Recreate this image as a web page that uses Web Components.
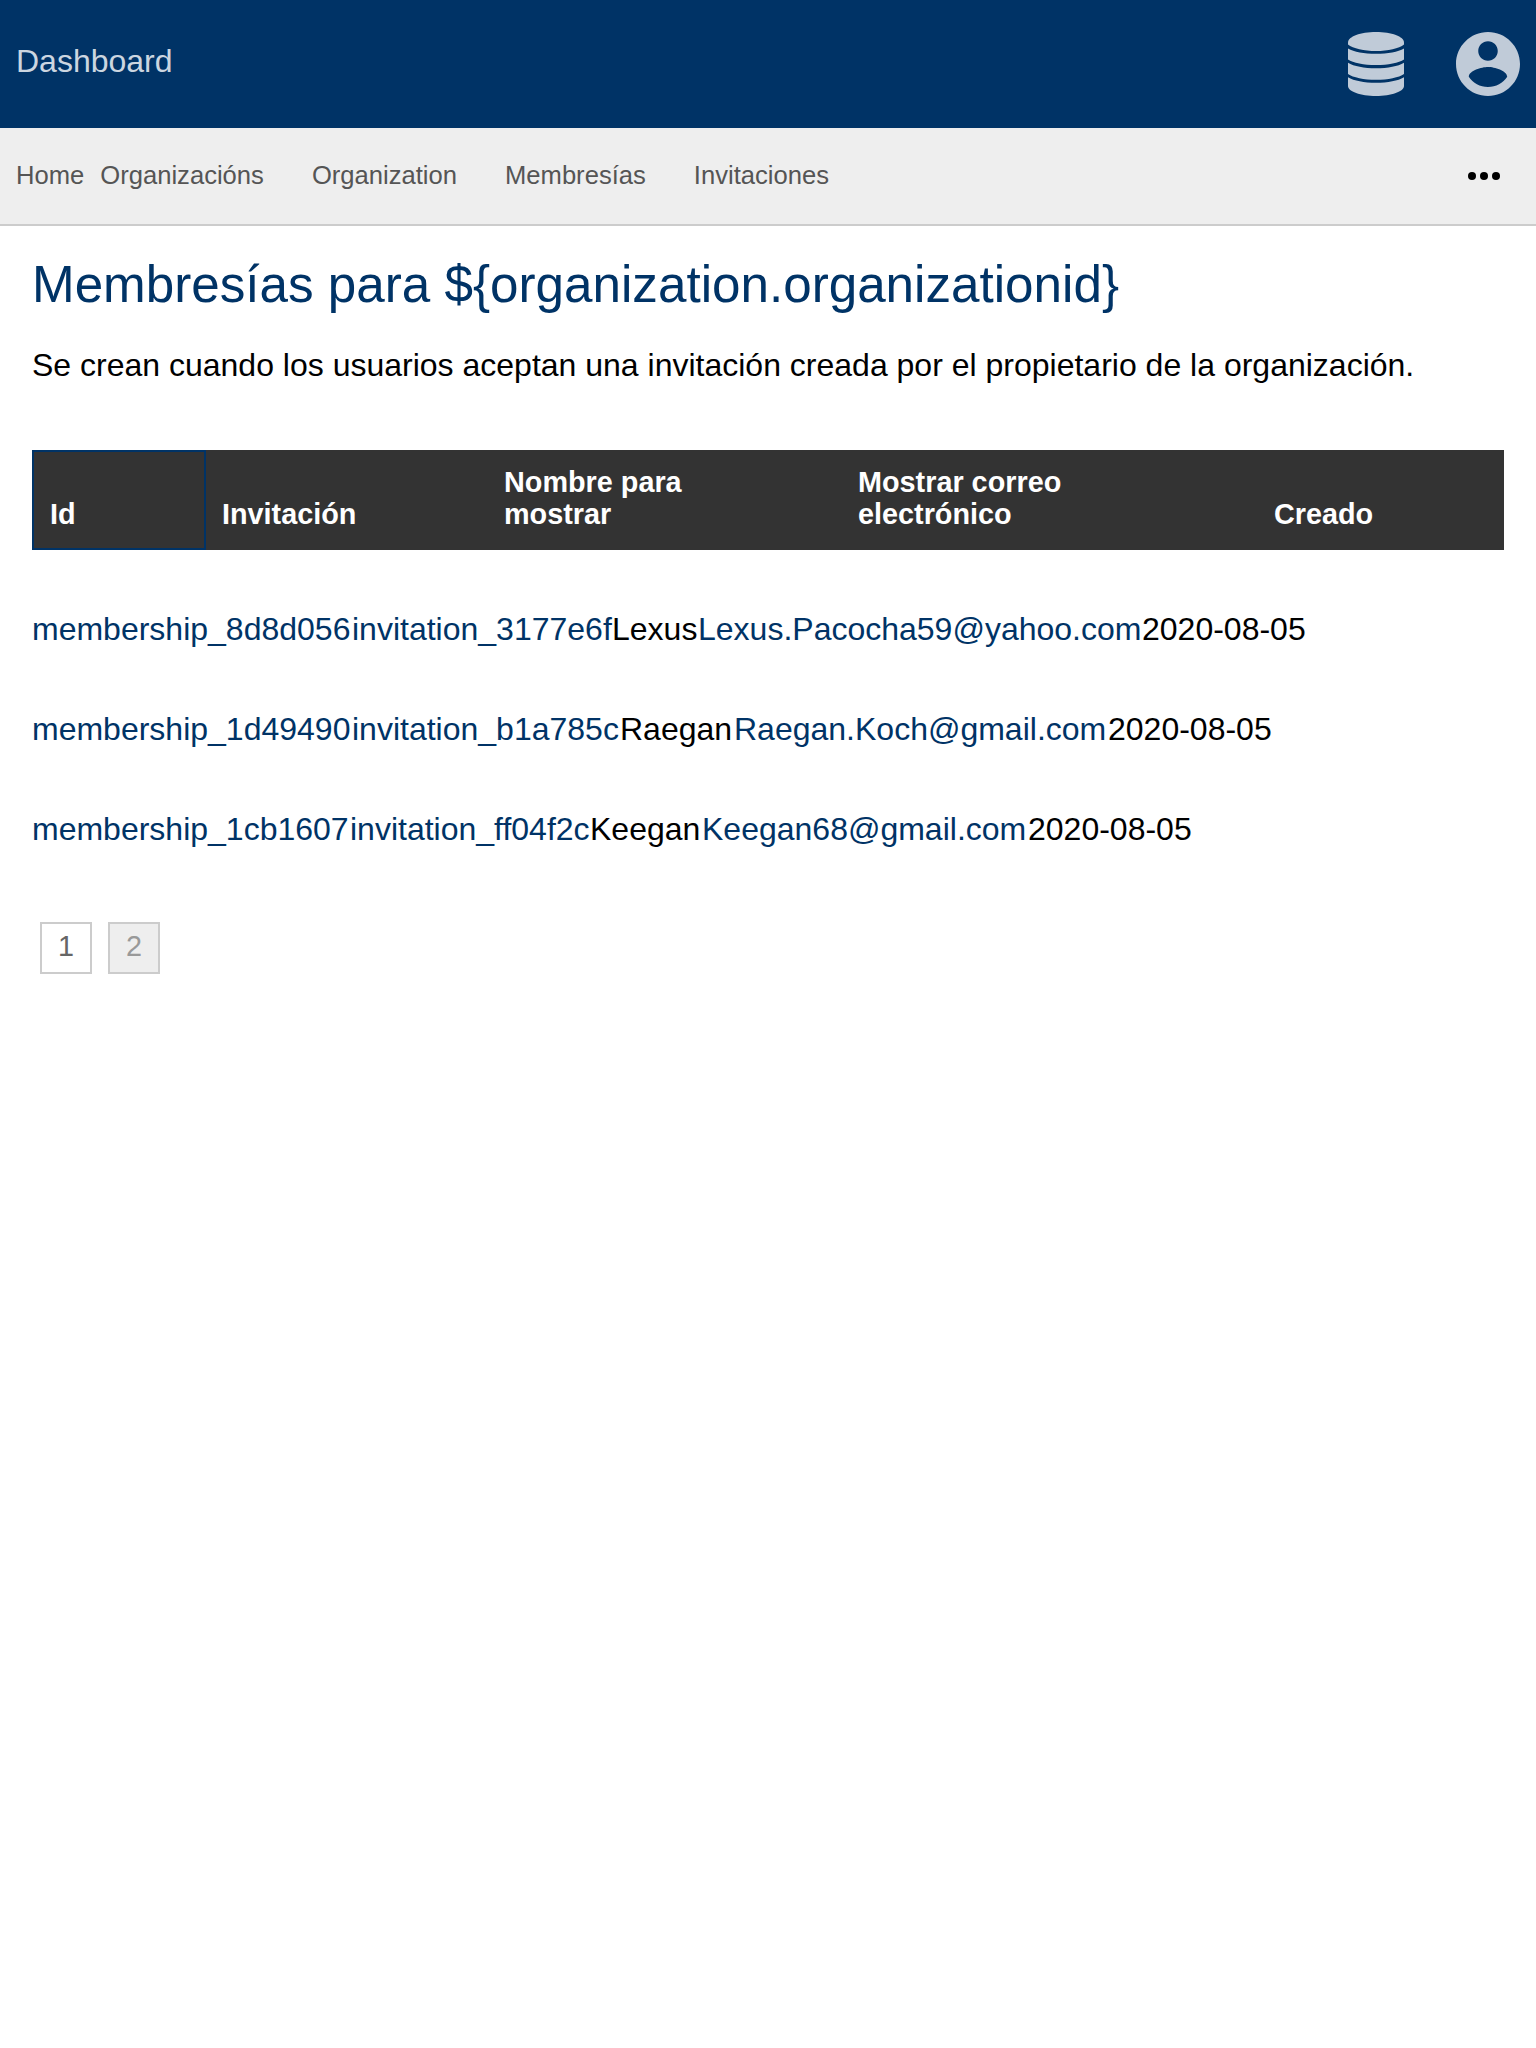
<!DOCTYPE html>
<html lang="es">
<head>
<meta charset="utf-8">
<title>Dashboard</title>
<style>
body{margin:0;background:#fff;color:#000;font:32px/1.25 "Liberation Sans",Arial,sans-serif}
</style>
</head>
<body>
<app-header>Dashboard</app-header>
<nav-bar>
  <nav-item style="--gap:16px">Home</nav-item>
  <nav-item>Organizacións</nav-item>
  <nav-item>Organization</nav-item>
  <nav-item>Membresías</nav-item>
  <nav-item>Invitaciones</nav-item>
</nav-bar>
<membership-page></membership-page>
<script>
function define(name, html, setup) {
  const t = document.createElement('template');
  t.innerHTML = html;
  customElements.define(name, class extends HTMLElement {
    constructor() {
      super();
      this.attachShadow({mode: 'open'}).append(t.content.cloneNode(true));
    }
    connectedCallback() { if (setup) setup(this, this.shadowRoot); }
  });
}

define('app-header', `
<style>
:host{display:flex;align-items:center;height:128px;box-sizing:border-box;padding:0 16px;background:#003366;color:#ccd6e0}
.title{flex:1;line-height:40px;padding-bottom:6px}
.icons{display:flex;gap:52px;align-items:center}
svg{display:block;fill:#c0cbd8}
</style>
<div class="title"><slot></slot></div>
<div class="icons">
<svg width="56" height="64" viewBox="0 0 56 64"><path d="M0 10.500C0 4.500 12.500 0 28 0s28 4.500 28 10.500v2C51 16.500 40 19 28 19S5 16.500 0 12.500z"/><path d="M0 16.500C6 20 16 21.800 28 21.800S50 20 56 16.500v11C51 31 40 33 28 33S5 31 0 27.500z"/><path d="M0 30.800C6 34.400 16 36.300 28 36.300s22-1.900 28-5.500v11.200C51 45.500 40 47.800 28 47.800S5 45.500 0 42z"/><path d="M0 45.200C6 48.800 16 50.700 28 50.700s22-1.900 28-5.500V54c0 5.500-12.500 10-28 10S0 59.500 0 54z"/></svg>
<svg width="64" height="64" viewBox="2 2 20 20"><path d="M12 2C6.480 2 2 6.480 2 12s4.480 10 10 10 10-4.480 10-10S17.520 2 12 2zm0 2.900c1.700 0 3.050 1.350 3.050 3.050S13.700 11 12 11 8.950 9.650 8.950 7.950 10.300 4.900 12 4.900zm0 14.300c-2.500 0-4.710-1.280-6-3.220.030-1.990 4-3.080 6-3.080 1.990 0 5.970 1.090 6 3.080-1.290 1.940-3.500 3.220-6 3.220z"/></svg>
</div>`);

define('nav-item', `
<style>:host{display:block;margin-right:var(--gap,48px)}</style><slot></slot>`);

define('nav-bar', `
<style>
:host{display:flex;align-items:center;height:98px;box-sizing:border-box;padding:0 36px 0 16px;background:#eee;border-bottom:2px solid #ccc;color:#555;font-size:25.6px}
.items{display:flex;flex:1}
svg{display:block}
</style>
<div class="items"><slot></slot></div>
<svg width="32" height="8" viewBox="0 0 32 8"><circle cx="4" cy="4" r="4"/><circle cx="16" cy="4" r="4"/><circle cx="28" cy="4" r="4"/></svg>`);

define('member-head', `
<style>
:host{display:flex;height:100px;margin-bottom:59px;background:#333;color:#fff;font-size:28.8px;font-weight:bold;line-height:32px}
div{box-sizing:border-box;padding:0 18px 20px;display:flex;align-items:flex-end}
.id{width:174px;border:2px solid #003366;padding:0 16px 18px}
.inv{width:280px;padding-left:16px}
.name{width:354px}.mail{width:416px}
</style>
<div class="id">Id</div><div class="inv">Invitación</div>
<div class="name"><span>Nombre para<br>mostrar</span></div>
<div class="mail"><span>Mostrar correo<br>electrónico</span></div>
<div>Creado</div>`);

// Cells hug their text, with widths rounded up to a whole 2px step.
define('member-row', `
<style>
:host{display:flex;height:40px;line-height:40px;margin-bottom:60px;white-space:nowrap}
a,span{flex:none}
a{color:#003366}
</style>
<a class="id"></a><a class="inv"></a><span class="name"></span><a class="mail"></a><span class="date"></span>`,
(el, root) => {
  for (const k of ['id', 'inv', 'name', 'mail', 'date']) {
    const cell = root.querySelector('.' + k);
    cell.textContent = el.getAttribute('data-' + k);
    cell.style.width = Math.ceil(cell.getBoundingClientRect().width / 2) * 2 + 'px';
  }
});

define('page-link', `
<style>
:host{display:block;box-sizing:border-box;width:52px;height:52px;border:2px solid #ccc;background:#fff;color:#666;font-size:28.8px;line-height:44px;text-align:center}
:host([muted]){background:#eee;color:#999}
</style><slot></slot>`);

define('membership-page', `
<style>
:host{display:block;padding:27px 32px 0}
h1{margin:0;font-size:51.2px;font-weight:normal;line-height:64px;color:#003366}
p{margin:28px 0 65px;line-height:40px}
.pages{display:flex;gap:16px;padding:13px 8px}
</style>
<h1>Membresías para \${organization.organizationid}</h1>
<p>Se crean cuando los usuarios aceptan una invitación creada por el propietario de la organización.</p>
<member-head></member-head>
<member-row data-id="membership_8d8d056" data-inv="invitation_3177e6f" data-name="Lexus" data-mail="Lexus.Pacocha59@yahoo.com" data-date="2020-08-05"></member-row>
<member-row data-id="membership_1d49490" data-inv="invitation_b1a785c" data-name="Raegan" data-mail="Raegan.Koch@gmail.com" data-date="2020-08-05"></member-row>
<member-row data-id="membership_1cb1607" data-inv="invitation_ff04f2c" data-name="Keegan" data-mail="Keegan68@gmail.com" data-date="2020-08-05"></member-row>
<div class="pages"><page-link>1</page-link><page-link muted>2</page-link></div>`);
</script>
</body>
</html>
